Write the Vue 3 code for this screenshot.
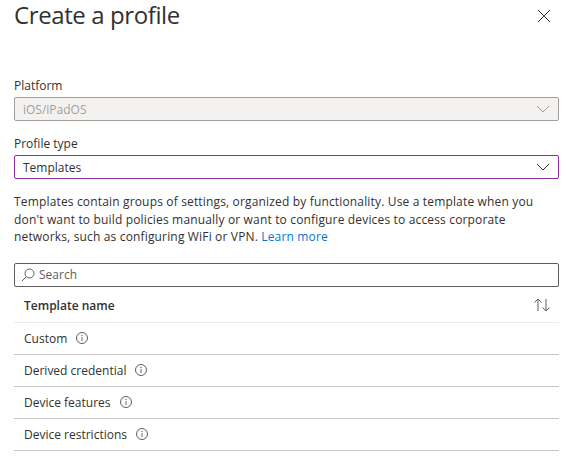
<script setup>
const templates = ['Custom', 'Derived credential', 'Device features', 'Device restrictions']
</script>

<template>
  <div class="panel">
    <header class="panel__head">
      <h1 class="panel__title">Create a profile</h1>
      <svg class="panel__close" width="14" height="14" viewBox="0 0 14 14">
        <path d="M1 1l12 12M13 1L1 13" stroke="#323130" stroke-width="1" fill="none" />
      </svg>
    </header>

    <label class="field-label field-label--first">Platform</label>
    <div class="select select--disabled">
      <span>iOS/iPadOS</span>
      <svg width="14" height="8" viewBox="0 0 14 8">
        <path d="M1 1l6 6 6-6" stroke="#a19f9d" fill="none" />
      </svg>
    </div>

    <label class="field-label">Profile type</label>
    <div class="select select--focus">
      <span>Templates</span>
      <svg width="14" height="8" viewBox="0 0 14 8">
        <path d="M1 1l6 6 6-6" stroke="#323130" fill="none" />
      </svg>
    </div>

    <p class="desc">
      Templates contain groups of settings, organized by functionality. Use a template when you
      don't want to build policies manually or want to configure devices to access corporate
      networks, such as configuring WiFi or VPN. <a class="desc__link">Learn more</a>
    </p>

    <div class="search">
      <svg width="14" height="14" viewBox="0 0 14 14">
        <circle cx="8.5" cy="5.5" r="4.5" stroke="#605e5c" fill="none" />
        <path d="M5.2 8.8L0.8 13.2" stroke="#605e5c" fill="none" />
      </svg>
      <span>Search</span>
    </div>

    <div class="table">
      <div class="table__head">
        <span>Template name</span>
        <svg width="18" height="14" viewBox="0 0 18 14">
          <path d="M5 13V1M1.5 4.5L5 1l3.5 3.5M13 1v12M9.5 9.5L13 13l3.5-3.5" stroke="#605e5c" fill="none" />
        </svg>
      </div>
      <div v-for="name in templates" :key="name" class="table__row">
        <span>{{ name }}</span>
        <svg width="12" height="12" viewBox="0 0 12 12">
          <circle cx="6" cy="6" r="5.5" stroke="#605e5c" fill="none" />
          <path d="M6 5.2V9" stroke="#605e5c" fill="none" />
          <circle cx="6" cy="3.5" r="0.7" fill="#605e5c" />
        </svg>
      </div>
    </div>
  </div>
</template>

<style scoped>
.panel {
  width: 567px;
  height: 458px;
  box-sizing: border-box;
  padding: 0 8px 0 14px;
  overflow: hidden;
  background: #fff;
  color: #323130;
  font-family: "Open Sans", "Noto Sans", sans-serif;
  font-size: 12px;
}

.panel__head {
  display: flex;
  align-items: center;
  justify-content: space-between;
  height: 30px;
}

.panel__title {
  margin: 0;
  font-size: 24px;
  font-weight: 400;
  line-height: 30px;
  letter-spacing: -0.4px;
}

.panel__close {
  margin-top: 2px;
  margin-right: 8px;
}

.field-label {
  display: block;
  height: 17px;
  line-height: 17px;
  margin: 14px 0 3px;
}

.field-label--first {
  margin-top: 47px;
}

.select {
  display: flex;
  align-items: center;
  justify-content: space-between;
  box-sizing: border-box;
  height: 24px;
  padding: 0 8px;
  border: 1px solid #605e5c;
  border-radius: 2px;
}

.select--disabled {
  background: #f3f2f1;
  border-color: #a19f9d;
  color: #a19f9d;
}

.select--focus {
  border-color: #8a2da5;
}

.desc {
  width: 524px;
  margin: 14px 0 17px;
  line-height: 17.5px;
  letter-spacing: 0.16px;
}

.desc__link {
  color: #0078d4;
}

.search {
  display: flex;
  align-items: center;
  gap: 4px;
  box-sizing: border-box;
  height: 24px;
  padding: 0 6px;
  border: 1px solid #605e5c;
  border-radius: 2px;
  color: #605e5c;
}

.table__head {
  display: flex;
  align-items: center;
  justify-content: space-between;
  box-sizing: border-box;
  height: 36px;
  padding: 2px 8px 0 10px;
  border-bottom: 1px solid #edebe9;
  font-weight: 600;
}

.table__row {
  display: flex;
  align-items: center;
  gap: 9px;
  box-sizing: border-box;
  height: 32px;
  padding: 0 10px;
  border-bottom: 1px solid #c8c6c4;
}
</style>
